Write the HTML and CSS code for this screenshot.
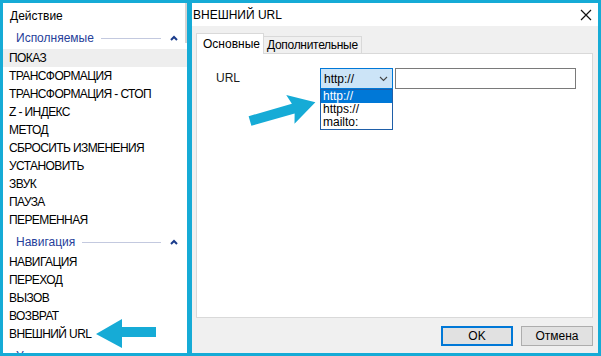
FILE: index.html
```html
<!DOCTYPE html>
<html lang="ru">
<head>
    <meta charset="UTF-8">
    <meta name="viewport" content="width=device-width, initial-scale=1.0">
    <title>Внешний URL</title>
    <link rel="stylesheet" href="styles.css">
</head>
<body>
    <div class="screen">
        <aside class="actions">
            <div class="actions-title">Действие</div>

            <section class="group">
                <div class="group-head">
                    <span>Исполняемые</span>
                    <i class="group-rule"></i>
                    <svg class="caret" width="8" height="6" viewBox="0 0 8 6"><path d="M1 5 L4 2 L7 5" fill="none" stroke="#1b3c8c" stroke-width="2"/></svg>
                </div>
                <ul class="group-items">
                    <li class="active">ПОКАЗ</li>
                    <li>ТРАНСФОРМАЦИЯ</li>
                    <li>ТРАНСФОРМАЦИЯ - СТОП</li>
                    <li>Z - ИНДЕКС</li>
                    <li>МЕТОД</li>
                    <li>СБРОСИТЬ ИЗМЕНЕНИЯ</li>
                    <li>УСТАНОВИТЬ</li>
                    <li>ЗВУК</li>
                    <li>ПАУЗА</li>
                    <li>ПЕРЕМЕННАЯ</li>
                </ul>
            </section>

            <section class="group">
                <div class="group-head">
                    <span>Навигация</span>
                    <i class="group-rule"></i>
                    <svg class="caret" width="8" height="6" viewBox="0 0 8 6"><path d="M1 5 L4 2 L7 5" fill="none" stroke="#1b3c8c" stroke-width="2"/></svg>
                </div>
                <ul class="group-items">
                    <li>НАВИГАЦИЯ</li>
                    <li>ПЕРЕХОД</li>
                    <li>ВЫЗОВ</li>
                    <li>ВОЗВРАТ</li>
                    <li>ВНЕШНИЙ URL</li>
                </ul>
            </section>

            <section class="group">
                <div class="group-head">
                    <span>Условия</span>
                    <i class="group-rule"></i>
                    <svg class="caret" width="8" height="6" viewBox="0 0 8 6"><path d="M1 5 L4 2 L7 5" fill="none" stroke="#1b3c8c" stroke-width="2"/></svg>
                </div>
            </section>

            <div class="scroll-thumb"></div>
        </aside>

        <div class="splitter"></div>

        <div class="dialog">
            <div class="dialog-title">
                <span>ВНЕШНИЙ URL</span>
                <svg class="close" width="12" height="12" viewBox="0 0 12 12"><path d="M1 1 L11 11 M11 1 L1 11" stroke="#111" stroke-width="1.2"/></svg>
            </div>

            <div class="dialog-body">
                <div class="tabs">
                    <div class="tab active">Основные</div>
                    <div class="tab">Дополнительные</div>
                </div>

                <div class="tab-panel">
                    <div class="field-row">
                        <label class="field-label">URL</label>
                        <div class="combo">
                            <div class="combo-box">
                                <span>http://</span>
                                <svg width="9" height="6" viewBox="0 0 9 6"><path d="M1 1 L4.5 4.5 L8 1" fill="none" stroke="#444" stroke-width="1.1"/></svg>
                            </div>
                            <ul class="combo-list">
                                <li class="selected">http://</li>
                                <li>https://</li>
                                <li>mailto:</li>
                            </ul>
                        </div>
                        <input class="url-input" type="text">
                    </div>
                </div>

                <div class="buttons">
                    <button class="btn primary">OK</button>
                    <button class="btn">Отмена</button>
                </div>
            </div>
        </div>

        <!-- callout arrows -->
        <svg class="pointer" width="601" height="356" viewBox="0 0 601 356">
            <g transform="translate(250 121) rotate(-16)" fill="#16abd6">
                <polygon points="0,-5 45,-5 42,-15 68,0 42,15 45,5 0,5"/>
            </g>
            <polygon fill="#16abd6" points="96,334 122,319 122,327 156,327 156,337 122,337 122,348"/>
        </svg>
    </div>
</body>
</html>
```

FILE: styles.css
```css
* {
    box-sizing: border-box;
}
body {
    margin: 0;
    font-family: "Liberation Sans", Arial, sans-serif;
    font-size: 12px;
    color: #000;
}
.screen {
    position: relative;
    display: flex;
    width: 601px;
    height: 356px;
    border: 3px solid #16abd6;
    overflow: hidden;
}

/* left action list */
.actions {
    position: relative;
    width: 184px;
    flex-shrink: 0;
    background: #fff;
    overflow: hidden;
}
.actions-title {
    height: 24px;
    line-height: 26px;
    padding-left: 7px;
}
.group + .group {
    margin-top: 2px;
}
.group-head {
    display: flex;
    align-items: center;
    height: 22px;
    padding: 0 9px 0 13px;
    color: #26409a;
}
.group-rule {
    flex: 1;
    height: 1px;
    margin: 0 9px 0 7px;
    background: #c3c9df;
}
.caret {
    display: block;
}
.group-items {
    list-style: none;
    margin: 0;
    padding: 0;
}
.group-items li {
    height: 18px;
    line-height: 18px;
    padding-left: 6px;
    letter-spacing: -0.6px;
}
.group-items li.active {
    background: #eeeeee;
}
.scroll-thumb {
    position: absolute;
    top: 0;
    right: 0;
    width: 2px;
    height: 40px;
    background: #d4d4d4;
}
.splitter {
    width: 5px;
    flex-shrink: 0;
    background: #16abd6;
}

/* dialog */
.dialog {
    flex: 1;
    display: flex;
    flex-direction: column;
    background: #f0f0f0;
}
.dialog-title {
    display: flex;
    align-items: center;
    justify-content: space-between;
    height: 23px;
    padding: 0 6px 0 1px;
    background: #fff;
}
.close {
    display: block;
}
.dialog-body {
    flex: 1;
    padding: 7px 5px 0 4px;
}
.tabs {
    display: flex;
    align-items: flex-end;
    height: 20px;
    position: relative;
    z-index: 1;
}
.tab {
    height: 17px;
    line-height: 16px;
    padding: 0 3px;
    border: 1px solid #d9d9d9;
    border-bottom: none;
    background: #f0f0f0;
    letter-spacing: -0.3px;
}
.tab.active {
    height: 21px;
    line-height: 20px;
    width: 68px;
    padding-left: 6px;
    background: #fff;
    margin-bottom: -1px;
    letter-spacing: 0;
}
.tab.active + .tab {
    border-left: none;
}
.tab-panel {
    height: 265px;
    border: 1px solid #d9d9d9;
    background: #fff;
    padding: 14px 0 0 19px;
}
.field-row {
    display: flex;
    align-items: flex-start;
}
.field-label {
    width: 104px;
    line-height: 20px;
    color: #1a1a1a;
}
.combo {
    position: relative;
    width: 73px;
}
.combo-box {
    display: flex;
    align-items: center;
    justify-content: space-between;
    height: 21px;
    padding: 0 4px 0 3px;
    border: 1px solid #0078d7;
    background: #cce4f7;
}
.combo-list {
    position: absolute;
    top: 100%;
    left: 0;
    width: 73px;
    margin: 0;
    padding: 0;
    list-style: none;
    border: 1px solid #1f5fa8;
    background: #fff;
}
.combo-list li {
    height: 13px;
    line-height: 13px;
    padding-left: 2px;
}
.combo-list li.selected {
    background: #0078d7;
    color: #fff;
}
.url-input {
    width: 181px;
    height: 21px;
    margin-left: 2px;
    border: 1px solid #7a7a7a;
    font: inherit;
}
.buttons {
    display: flex;
    justify-content: flex-end;
    gap: 8px;
    padding-top: 8px;
}
.btn {
    width: 72px;
    height: 20px;
    padding: 0;
    border: 1px solid #adadad;
    background: #e1e1e1;
    font: inherit;
    color: #000;
}
.btn.primary {
    border: 2px solid #0078d7;
}

.pointer {
    position: absolute;
    top: -3px;
    left: -3px;
}
```
